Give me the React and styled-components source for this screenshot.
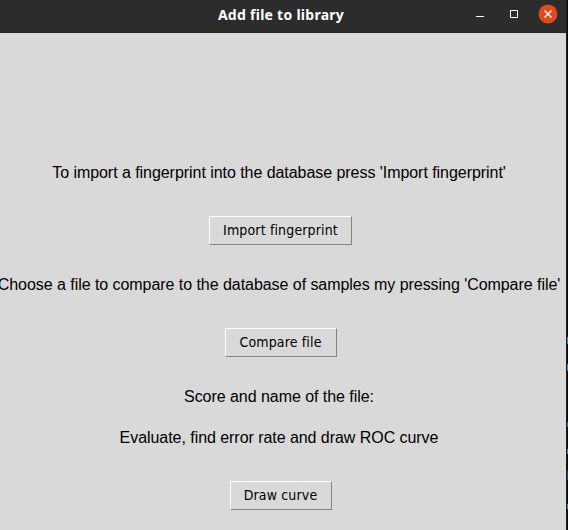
import React from 'react';
import styled, { createGlobalStyle } from 'styled-components';

const GlobalStyle = createGlobalStyle`
  *, *::before, *::after { box-sizing: border-box; }
  html, body { margin: 0; padding: 0; background: #111; overflow: hidden; }
`;

const Desktop = styled.div`
  display: flex;
  width: 568px;
  height: 530px;
  overflow: hidden;
  background: #1b1b1b;
`;

const AppWindow = styled.main`
  width: 566px;
  height: 530px;
  flex: none;
  display: flex;
  flex-direction: column;
  background: #d9d9d9;
`;

const Backdrop = styled.svg`
  flex: none;
  width: 2px;
  height: 530px;
`;

const TitleBar = styled.header`
  display: grid;
  grid-template-columns: 1fr auto 1fr;
  align-items: center;
  flex: none;
  height: 33px;
  padding-bottom: 4px;
  border-bottom: 1px solid #252525;
  background: #2c2c2c;
`;

const Title = styled.h1`
  grid-column: 2;
  position: relative;
  top: 1px;
  left: -2px;
  margin: 0;
  color: #fff;
  font: bold 14px/20px "Noto Sans", sans-serif;
  letter-spacing: 0.27px;
  white-space: nowrap;
`;

const Controls = styled.div`
  display: flex;
  justify-content: flex-end;
  align-items: center;
  gap: 14px;
  padding-right: 8px;
`;

const Control = styled.button`
  display: flex;
  width: 20px;
  height: 20px;
  padding: 0;
  border: 0;
  background: transparent;
`;

const Content = styled.section`
  display: flex;
  flex-direction: column;
  align-items: center;
  padding-top: 129px;
  width: 558px;
`;

const Message = styled.p`
  margin: 0 0 ${(p) => p.$gap}px;
  color: #000;
  font: 16px/22px "Liberation Sans", sans-serif;
  letter-spacing: -0.05px;
  white-space: nowrap;
`;

const PushButton = styled.button`
  width: ${(p) => p.$width}px;
  height: 29px;
  margin: 0 0 ${(p) => p.$gap}px 3px;
  padding: 0;
  border: 1px solid;
  border-color: #fff #828282 #828282 #fff;
  background: #d9d9d9;
  color: #000;
  font: 14px/27px "DejaVu Sans Condensed", "DejaVu Sans", sans-serif;
  font-stretch: condensed;
  letter-spacing: 0.15px;
`;

const specks = [
  { y: 337, h: 7, c: '#4d84b8' },
  { y: 364, h: 7, c: '#4d84b8' },
  { y: 422, h: 5, c: '#2b7770' },
  { y: 449, h: 5, c: '#4d7ca8' },
  { y: 471, h: 9, c: '#194d5c' },
  { y: 504, h: 5, c: '#4d7ca8' },
];

export default function App() {
  return (
    <Desktop>
      <GlobalStyle />
      <AppWindow>
        <TitleBar>
          <Title>Add file to library</Title>
          <Controls>
            <Control aria-label="Minimize">
              <svg width="20" height="20"><path d="M6 12.5h8" stroke="#fff" /></svg>
            </Control>
            <Control aria-label="Maximize">
              <svg width="20" height="20"><path d="M6.5 6.5h7v7h-7z" fill="none" stroke="#fff" /></svg>
            </Control>
            <Control aria-label="Close">
              <svg width="20" height="20">
                <circle cx="10" cy="10" r="9.4" fill="#e04b1a" />
                <path d="M6.5 6.5l7 7M13.5 6.5l-7 7" stroke="#fff" strokeWidth="1.4" />
              </svg>
            </Control>
          </Controls>
        </TitleBar>
        <Content>
          <Message $gap={32}>To import a fingerprint into the database press 'Import fingerprint'</Message>
          <PushButton $width={143} $gap={29}>Import fingerprint</PushButton>
          <Message $gap={32}>Choose a file to compare to the database of samples my pressing 'Compare file'</Message>
          <PushButton $width={112} $gap={29}>Compare file</PushButton>
          <Message $gap={19}>Score and name of the file:</Message>
          <Message $gap={32}>Evaluate, find error rate and draw ROC curve</Message>
          <PushButton $width={102} $gap={0}>Draw curve</PushButton>
        </Content>
      </AppWindow>
      <Backdrop viewBox="0 0 2 530" aria-hidden="true">
        <rect width="1" height="530" fill="#1b1b1b" />
        <rect x="1" width="1" height="530" fill="#0b0b0d" />
        {specks.map((s) => (
          <rect key={s.y} x="1" y={s.y} width="1" height={s.h} fill={s.c} />
        ))}
      </Backdrop>
    </Desktop>
  );
}
